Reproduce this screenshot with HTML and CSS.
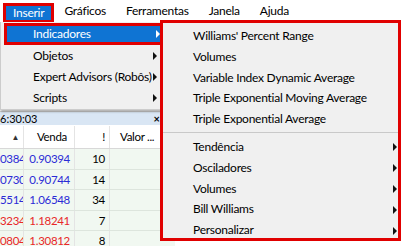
FILE: index.html
```html
<!DOCTYPE html>
<html>
<head>
<meta charset="utf-8">
<link rel="stylesheet" href="styles.css">
</head>
<body>
<div class="menubar">
  <div class="mb-item mb-active">Inserir</div>
  <div class="mb-item">Gráficos</div>
  <div class="mb-item">Ferramentas</div>
  <div class="mb-item">Janela</div>
  <div class="mb-item">Ajuda</div>
</div>

<div class="workspace">
  <div class="window">
    <div class="win-blank"></div>
    <div class="win-title"><span>6:30:03</span><span class="win-close">×</span></div>
    <div class="row head">
      <div class="c c1">▲</div>
      <div class="c c2">Venda</div>
      <div class="c c3">!</div>
      <div class="c c4 left">Valor ...</div>
    </div>
    <div class="row data blue">
      <div class="c c1">0384</div><div class="c c2">0.90394</div><div class="c c3 k">10</div><div class="c c4"></div>
    </div>
    <div class="row data blue">
      <div class="c c1">0730</div><div class="c c2">0.90744</div><div class="c c3 k">14</div><div class="c c4"></div>
    </div>
    <div class="row data blue">
      <div class="c c1">5514</div><div class="c c2">1.06548</div><div class="c c3 k">34</div><div class="c c4"></div>
    </div>
    <div class="row data red">
      <div class="c c1">3234</div><div class="c c2">1.18241</div><div class="c c3 k">7</div><div class="c c4"></div>
    </div>
    <div class="row data red">
      <div class="c c1">0804</div><div class="c c2">1.30812</div><div class="c c3 k">8</div><div class="c c4"></div>
    </div>
  </div>

  <div class="dropdown">
    <div class="dd-item dd-active"><span>Indicadores</span><i class="arrow white"></i></div>
    <div class="dd-item"><span>Objetos</span><i class="arrow"></i></div>
    <div class="dd-item"><span>Expert Advisors (Robôs)</span><i class="arrow"></i></div>
    <div class="dd-item"><span>Scripts</span><i class="arrow"></i></div>
  </div>

  <div class="submenu">
    <div class="sm-item">Williams' Percent Range</div>
    <div class="sm-item">Volumes</div>
    <div class="sm-item">Variable Index Dynamic Average</div>
    <div class="sm-item">Triple Exponential Moving Average</div>
    <div class="sm-item">Triple Exponential Average</div>
    <div class="sm-sep"></div>
    <div class="sm-item"><span>Tendência</span><i class="arrow"></i></div>
    <div class="sm-item"><span>Osciladores</span><i class="arrow"></i></div>
    <div class="sm-item"><span>Volumes</span><i class="arrow"></i></div>
    <div class="sm-item"><span>Bill Williams</span><i class="arrow"></i></div>
    <div class="sm-item"><span>Personalizar</span><i class="arrow"></i></div>
  </div>
</div>
</body>
</html>
```

FILE: styles.css
```css
html, body {
  margin: 0;
  padding: 0;
  background: #ffffff;
  font-family: Lato, "Open Sans", sans-serif;
  font-size: 12px;
  letter-spacing: -0.25px;
  color: #000;
  overflow: hidden;
  width: 403px;
  height: 246px;
}

.menubar {
  display: flex;
  align-items: flex-start;
  height: 22px;
  background: #ffffff;
}
.mb-item {
  padding: 0 10px;
  line-height: 18px;
  margin-top: 2px;
  white-space: nowrap;
}
.mb-active {
  margin-left: 3px;
  margin-top: 3px;
  padding: 0 7px;
  border: 3px solid #e00000;
  border-bottom-width: 2px;
  background: #0f74d3;
  color: #fff;
  line-height: 14px;
}

.workspace {
  position: relative;
}

.window {
  width: 175px;
  background: #ffffff;
}
.win-blank {
  height: 89px;
  background: #f0f0f0;
}
.win-title {
  display: flex;
  justify-content: space-between;
  align-items: center;
  height: 13px;
  background: #d9e6f4;
  font-size: 11px;
  letter-spacing: 0;
  padding: 0 15px 0 0;
  border-top: 1px solid #c8c8c8;
  color: #000;
}
.win-close {
  font-weight: bold;
  font-size: 11px;
}

.row {
  display: flex;
  height: 20.6px;
  line-height: 20px;
  font-size: 11.5px;
  letter-spacing: -0.3px;
}
.row.head {
  height: 22px;
  margin-top: 1px;
  line-height: 22px;
  background: #ffffff;
  border-bottom: 1px solid #d8d8d8;
}
.row.data {
  background: #f1f8f1;
  border-bottom: 1px solid #dde5dd;
  box-sizing: border-box;
}
.c {
  box-sizing: border-box;
  text-align: right;
  overflow: hidden;
  white-space: nowrap;
  border-right: 1px solid #e4e4e4;
}
.c1 { width: 24px; padding-right: 5px; display: flex; justify-content: flex-end; }
.head .c1 { font-size: 8px; padding-right: 4px; color: #333; }
.c2 { width: 51px; padding-right: 4px; }
.head .c2 { padding-right: 7px; }
.c3 { width: 35px; padding-right: 4px; }
.c4 { flex: 1; border-right: none; }
.left { text-align: left; padding-left: 10px; }
.blue .c1, .blue .c2 { color: #2b2bd6; }
.red .c1, .red .c2 { color: #e82828; }
.k { color: #000; }
.data .c1 { direction: rtl; }

.dropdown {
  position: absolute;
  top: 0;
  left: 0;
  width: 160px;
  height: 86px;
  background: #f0f0f0;
  border: 1px solid #cccccc;
  border-top: none;
  box-shadow: 1px 2px 2px rgba(0,0,0,0.25);
  padding-top: 1px;
}
.dd-item {
  position: relative;
  height: 21px;
  line-height: 21px;
  padding-left: 32px;
  white-space: nowrap;
}
.dd-active {
  margin-left: 3px;
  margin-right: -3px;
  padding-left: 26px;
  height: 16px;
  line-height: 16px;
  border: 3px solid #e00000;
  background: #0f74d3;
  color: #fff;
}

.arrow {
  position: absolute;
  right: 4px;
  top: 50%;
  margin-top: -4px;
  width: 0;
  height: 0;
  border-top: 4px solid transparent;
  border-bottom: 4px solid transparent;
  border-left: 4px solid #111;
}
.arrow.white { border-left-color: #fff; right: 1px; }

.submenu {
  position: absolute;
  top: -2px;
  left: 160px;
  width: 235px;
  height: 212px;
  padding-top: 3px;
  border: 3px solid #e00000;
  background: #f0f0f0;
  overflow: hidden;
}
.sm-item {
  position: relative;
  height: 20.8px;
  line-height: 20.8px;
  padding-left: 30px;
  white-space: nowrap;
}
.sm-item .arrow { right: 1px; }
.sm-sep {
  height: 1px;
  background: #c9c9c9;
  margin: 2px 0 4px 0;
}
```
